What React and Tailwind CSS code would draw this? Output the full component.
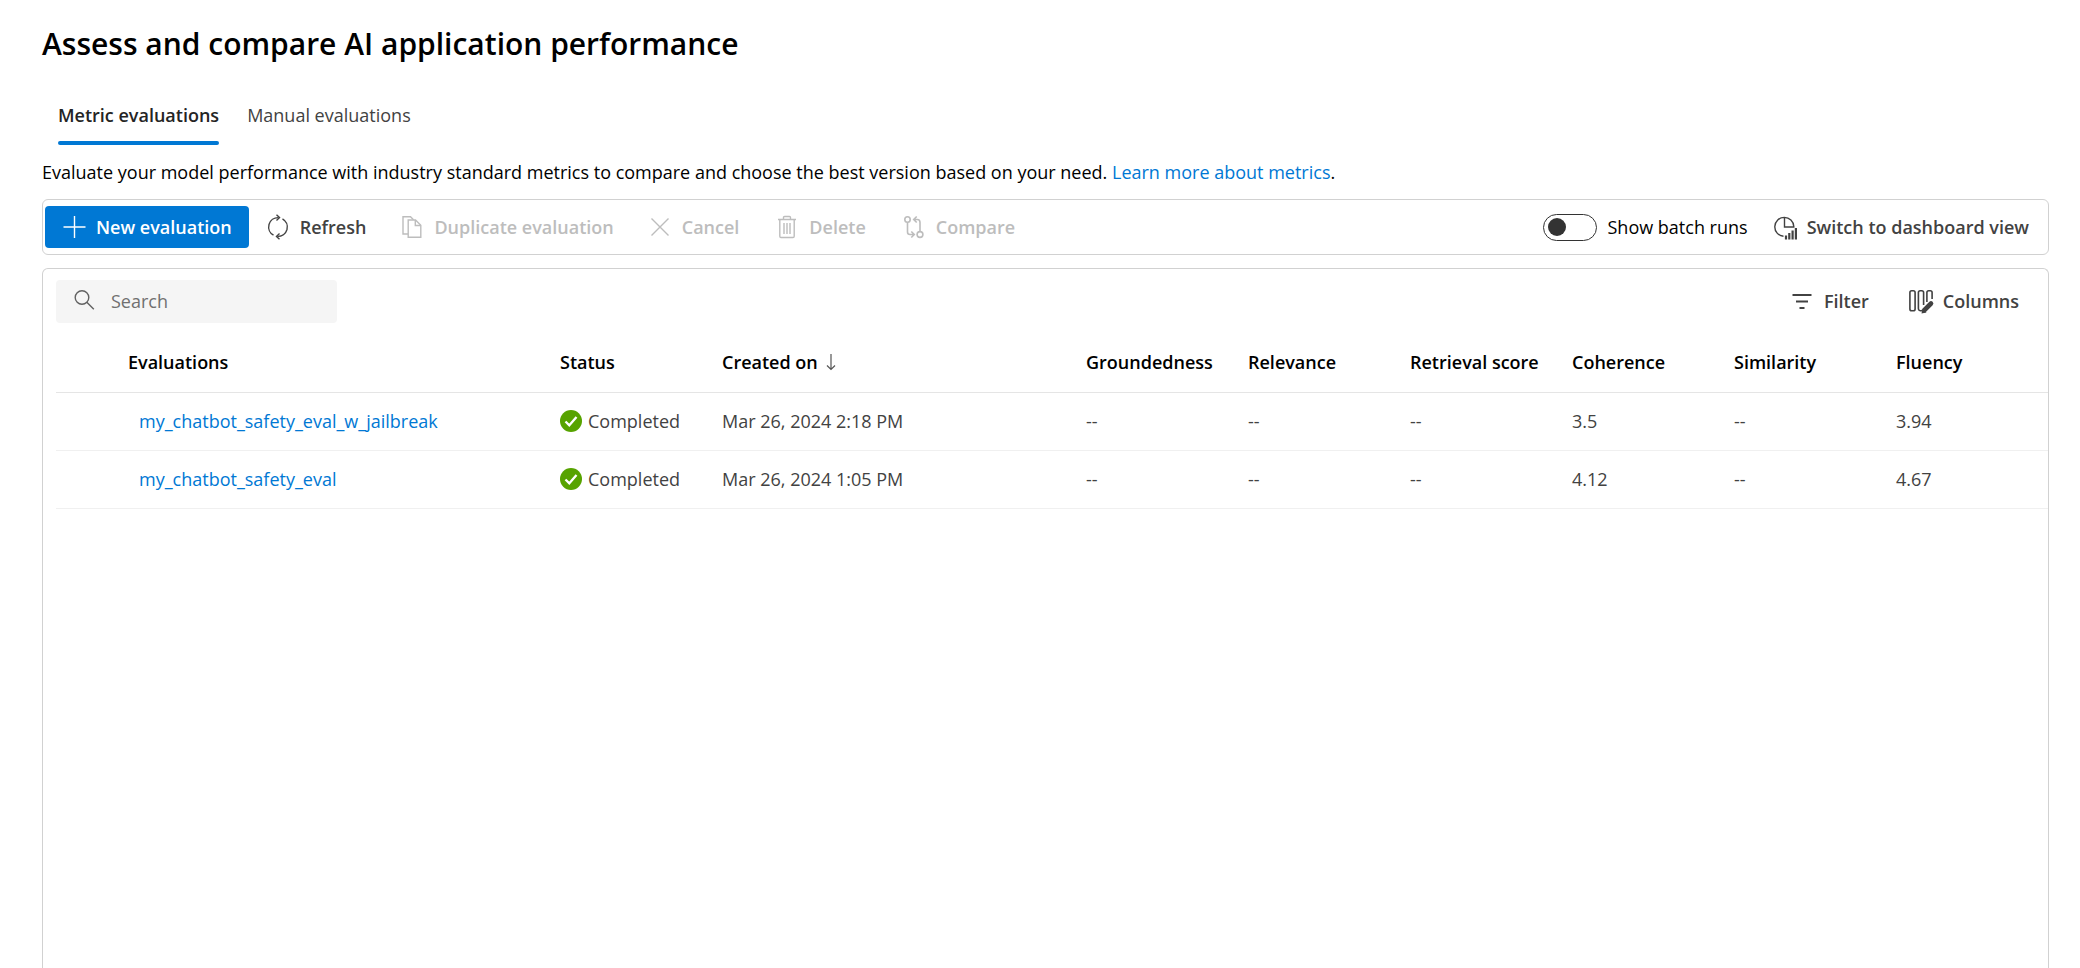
const metrics = ["Groundedness", "Relevance", "Retrieval score", "Coherence", "Similarity", "Fluency"];

const rows = [
  {
    name: "my_chatbot_safety_eval_w_jailbreak",
    created: "Mar 26, 2024 2:18 PM",
    scores: ["--", "--", "--", "3.5", "--", "3.94"],
  },
  {
    name: "my_chatbot_safety_eval",
    created: "Mar 26, 2024 1:05 PM",
    scores: ["--", "--", "--", "4.12", "--", "4.67"],
  },
];

function Icon({ children, className = "" }) {
  return (
    <svg
      width="24"
      height="24"
      viewBox="0 0 24 24"
      fill="none"
      stroke="currentColor"
      strokeWidth="1.4"
      aria-hidden="true"
      className={"shrink-0 overflow-visible " + className}
    >
      {children}
    </svg>
  );
}

const PlusIcon = () => (
  <Icon>
    <path d="M12.500 1v22M1.500 12h22" />
  </Icon>
);

const RefreshIcon = () => (
  <Icon>
    <path d="M7.5 20.2A9.6 9.6 0 0 1 3 9.5 9.6 9.6 0 0 1 12.5 2.6M16.5 3.8A9.6 9.6 0 0 1 21 14.5a9.6 9.6 0 0 1-9.5 6.9" />
    <path d="M10.500 -0.200l3 2.800-3 2.800M13.500 24.200l-3-2.800 3-2.800" />
  </Icon>
);

const DuplicateIcon = () => (
  <Icon>
    <path d="M8 19H3V1.700h7.500l3 3" />
    <path d="M8.200 5h7.300l5.300 5.300v12H8.200z" />
    <path d="M15.300 5v5.500h5.500" />
  </Icon>
);

const CancelIcon = () => (
  <Icon>
    <path d="M3.500 3.500l17 17M20.500 3.500l-17 17" />
  </Icon>
);

const DeleteIcon = () => (
  <Icon>
    <path d="M3 4.500h18M8.500 4.500v-2q0-1 1-1h5q1 0 1 1v2M4.800 4.500v16.800q0 1.200 1.200 1.200h12q1.200 0 1.200-1.200V4.500" />
    <path d="M9 8v11M12 8v11M15 8v11" />
  </Icon>
);

const CompareIcon = () => (
  <Icon className="[stroke-width:1.6]">
    <circle cx="5.500" cy="4.500" r="2.700" />
    <circle cx="18" cy="19.500" r="2.900" />
    <path d="M5.500 7.200V17q0 2.500 2.500 2.500h4M9.300 16.500l3 3-3 3M18 16.600V7.500Q18 4.500 15.500 4.500H12M14.700 1.500l-3 3 3 3" />
  </Icon>
);

const DashboardIcon = () => (
  <Icon>
    <path d="M10.500 21.300A9.500 9.500 0 1 1 20.800 11.500V12H11.500V2.500" />
    <path d="M13 20.500v4M16.300 18v6.500M19.600 15.500v9M22.900 13v11.500" strokeWidth="2.200" />
  </Icon>
);

const SearchIcon = () => (
  <Icon>
    <circle cx="10" cy="8.500" r="6.800" />
    <path d="M14.800 13.300l7 7" />
  </Icon>
);

const FilterIcon = () => (
  <Icon className="[stroke-width:1.8]">
    <path d="M2.500 6h19M6 12.500h12M9.500 19h5" />
  </Icon>
);

const ColumnsIcon = () => (
  <Icon className="[stroke-width:1.6]">
    <rect x="0.900" y="1.800" width="5.200" height="20" rx="1.800" />
    <path d="M13 21.500q-3.600.8-3.600-2V3.600q0-1.800 1.800-1.800h1.600q1.800 0 1.800 1.800v12.400" />
    <path d="M17.900 13V3.600q0-1.800 1.800-1.800h1.600q1.800 0 1.800 1.800V10" />
    <path d="M15.500 21l6.500-6.500" strokeWidth="4.600" strokeLinecap="round" />
    <path d="M12.500 24.500l1-5 4 4z" fill="currentColor" stroke="none" />
  </Icon>
);

function CommandButton({ icon, children, disabled }) {
  return (
    <button
      type="button"
      disabled={disabled}
      className="flex h-[42px] items-center gap-2.5 rounded px-[17px] font-semibold text-[#424242] disabled:text-[#bdbdbd]"
    >
      {icon}
      {children}
    </button>
  );
}

export default function App() {
  return (
    <main className="flex min-h-screen flex-col bg-white pl-[42px] pr-[31px] font-['Open_Sans','Noto_Sans',sans-serif] text-[18px] leading-6 text-black">
      <h1 className="pt-[23px] text-[30px] leading-[42px] font-semibold">
        Assess and compare AI application performance
      </h1>

      <div role="tablist" className="mt-[22px] flex gap-7 px-4">
        <button
          type="button"
          role="tab"
          aria-selected="true"
          className="flex h-[58px] flex-col justify-between pt-4 font-semibold text-[#242424]"
        >
          Metric evaluations
          <span className="h-1 w-full rounded-full bg-[#0078d4]" />
        </button>
        <button
          type="button"
          role="tab"
          aria-selected="false"
          className="flex h-[58px] flex-col pt-4 text-[#424242]"
        >
          Manual evaluations
        </button>
      </div>

      <p className="mt-[15px]">
        Evaluate your model performance with industry standard metrics to compare and choose the best version based on
        your need.{" "}
        <a href="#metrics" className="text-[#0078d4]">
          Learn more about metrics
        </a>
        .
      </p>

      <div role="toolbar" className="mt-[15px] flex h-14 items-center rounded-md border border-[#d1d1d1] px-[2px]">
        <button
          type="button"
          className="flex h-[42px] items-center gap-2.5 rounded bg-[#0078d4] px-[17px] font-semibold text-white"
        >
          <PlusIcon />
          New evaluation
        </button>
        <CommandButton icon={<RefreshIcon />}>Refresh</CommandButton>
        <CommandButton icon={<DuplicateIcon />} disabled>
          Duplicate evaluation
        </CommandButton>
        <div className="flex items-center gap-0.5">
          <CommandButton icon={<CancelIcon />} disabled>
            Cancel
          </CommandButton>
          <CommandButton icon={<DeleteIcon />} disabled>
            Delete
          </CommandButton>
          <CommandButton icon={<CompareIcon />} disabled>
            Compare
          </CommandButton>
        </div>

        <div className="ml-auto flex items-center">
          <label className="flex items-center gap-2.5 pr-2">
            <input
              type="checkbox"
              role="switch"
              className="flex h-[27px] w-[54px] appearance-none items-center rounded-full border border-[#333333] bg-white px-1 before:size-[18px] before:rounded-full before:bg-[#333333] checked:justify-end"
            />
            Show batch runs
          </label>
          <CommandButton icon={<DashboardIcon />}>Switch to dashboard view</CommandButton>
        </div>
      </div>

      <section className="mt-[13px] flex-1 rounded-t-md border border-b-0 border-[#d1d1d1] pl-[13px]">
        <div className="flex items-start pt-[11px] pr-3">
          <label className="flex h-[43px] w-[281px] items-center gap-[15px] rounded bg-[#f5f5f5] px-4 pb-0.5 text-[#616161]">
            <SearchIcon />
            <input
              type="text"
              aria-label="Search"
              placeholder="Search"
              className="w-full bg-transparent outline-none placeholder:text-[#707070]"
            />
          </label>
          <div className="ml-auto flex items-center gap-1.5">
            <CommandButton icon={<FilterIcon />}>Filter</CommandButton>
            <CommandButton icon={<ColumnsIcon />}>Columns</CommandButton>
          </div>
        </div>

        <table className="mt-[9px] w-full table-fixed text-left">
          <colgroup>
            <col className="w-[72px]" />
            <col className="w-[432px]" />
            <col className="w-[162px]" />
            <col className="w-[364px]" />
            <col className="w-[162px]" />
            <col className="w-[162px]" />
            <col className="w-[162px]" />
            <col className="w-[162px]" />
            <col className="w-[162px]" />
            <col />
          </colgroup>
          <thead>
            <tr className="h-[60px] border-b border-[#e5e5e5]">
              <td />
              <th className="font-semibold">Evaluations</th>
              <th className="font-semibold">Status</th>
              <th className="font-semibold" aria-sort="descending">
                <span className="flex items-center gap-2">
                  Created on
                  <svg
                    width="10"
                    height="18"
                    viewBox="0 0 10 18"
                    fill="none"
                    stroke="#555555"
                    strokeWidth="1.2"
                    aria-hidden="true"
                  >
                    <path d="M5 1v15.500M1 12.500l4 4 4-4" />
                  </svg>
                </span>
              </th>
              {metrics.map((m) => (
                <th key={m} className="font-semibold whitespace-nowrap">
                  {m}
                </th>
              ))}
            </tr>
          </thead>
          <tbody className="text-[#424242]">
            {rows.map((row) => (
              <tr key={row.name} className="h-[58px] border-b border-[#f0f0f0]">
                <td />
                <td className="pl-[11px]">
                  <a href={"#" + row.name} className="text-[#0078d4]">
                    {row.name}
                  </a>
                </td>
                <td>
                  <span className="flex items-center gap-1.5">
                    <svg width="22" height="22" viewBox="0 0 22 22" fill="none" aria-hidden="true" className="shrink-0">
                      <circle cx="11" cy="11" r="11" fill="#57a300" />
                      <path d="M5.500 11.500l3.800 3.800 7.200-8.300" stroke="white" strokeWidth="2.300" />
                    </svg>
                    Completed
                  </span>
                </td>
                <td>{row.created}</td>
                {row.scores.map((score, i) => (
                  <td key={metrics[i]}>{score}</td>
                ))}
              </tr>
            ))}
          </tbody>
        </table>
      </section>
    </main>
  );
}
